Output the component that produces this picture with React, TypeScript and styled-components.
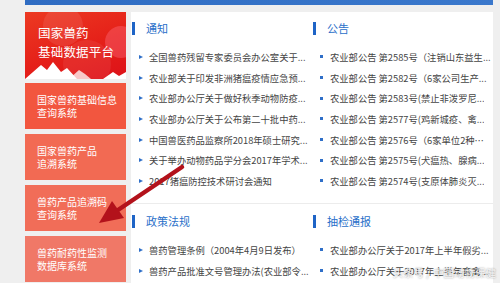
import React from 'react';
import styled, { createGlobalStyle } from 'styled-components';

const GlobalStyle = createGlobalStyle`
  html, body {
    margin: 0;
    padding: 0;
    background: #efefef;
    font-family: "Noto Sans CJK SC", "Noto Sans", sans-serif;
    overflow: hidden;
  }
`;

const sideMenu = [
  { label: '国家兽药基础信息\n查询系统', color: '#f2563f' },
  { label: '国家兽药产品\n追溯系统', color: '#f26a53' },
  { label: '兽药产品追溯码\n查询系统', color: '#f16d58' },
  { label: '兽药耐药性监测\n数据库系统', color: '#f07867' },
];

const blocks = [
  {
    title: '通知',
    bullet: 'arrow',
    items: [
      '全国兽药残留专家委员会办公室关于...',
      '农业部关于印发非洲猪瘟疫情应急预...',
      '农业部办公厅关于做好秋季动物防疫...',
      '农业部办公厅关于公布第二十批中药...',
      '中国兽医药品监察所2018年硕士研究...',
      '关于举办动物药品学分会2017年学术...',
      '2017猪瘟防控技术研讨会通知',
    ],
  },
  {
    title: '公告',
    bullet: 'square',
    items: [
      '农业部公告 第2585号（注销山东益生...',
      '农业部公告 第2582号（6家公司生产...',
      '农业部公告 第2583号(禁止非泼罗尼...',
      '农业部公告 第2577号(鸡新城疫、禽...',
      '农业部公告 第2576号（6家单位2种兽...',
      '农业部公告 第2575号(犬瘟热、腺病...',
      '农业部公告 第2574号(支原体肺炎灭...',
    ],
  },
  {
    title: '政策法规',
    bullet: 'arrow',
    items: ['兽药管理条例（2004年4月9日发布）', '兽药产品批准文号管理办法(农业部令...'],
  },
  {
    title: '抽检通报',
    bullet: 'square',
    items: ['农业部办公厅关于2017年上半年假劣...', '农业部办公厅关于2017年上半年畜禽...'],
  },
];

export default function App() {
  return (
    <>
      <GlobalStyle />
      <Page>
        <TopBar />
        <Main>
          <Side>
            <Banner>
              <BannerArt viewBox="0 0 101 67" preserveAspectRatio="none">
                <circle cx="38" cy="14" r="20" fill="rgba(255,255,255,0.09)" />
                <circle cx="96" cy="30" r="16" fill="rgba(255,120,140,0.35)" />
                <circle cx="62" cy="52" r="24" fill="rgba(255,255,255,0.07)" />
                <polygon points="0,67 8,60 16,53 22,58 28,50 36,60 42,56 52,67" fill="#fff" />
                <polygon points="44,67 54,58 60,62 66,67" fill="rgba(255,255,255,0.75)" />
                <polygon points="78,67 88,60 94,64 101,60 101,67" fill="#fff" />
              </BannerArt>
              <BannerTitle>
                国家兽药
                <br />
                基础数据平台
              </BannerTitle>
            </Banner>
            {sideMenu.map((m) => (
              <MenuCard key={m.label} $color={m.color}>
                {m.label.split('\n').map((l) => (
                  <MenuLine key={l}>{l}</MenuLine>
                ))}
              </MenuCard>
            ))}
          </Side>
          <Panel>
            {blocks.map((b, i) => (
              <Block key={b.title} $top={i < 2}>
                <Heading>
                  <HeadBar />
                  <HeadTitle>{b.title}</HeadTitle>
                </Heading>
                <List>
                  {b.items.map((t) => (
                    <Item key={t}>
                      {b.bullet === 'arrow' ? <ArrowBullet /> : <SquareBullet />}
                      <ItemText>{t}</ItemText>
                    </Item>
                  ))}
                </List>
              </Block>
            ))}
          </Panel>
        </Main>
        <Pointer viewBox="0 0 500 283">
          <line x1="182" y1="167" x2="112" y2="214" stroke="#b3121b" strokeWidth="4.5" strokeLinecap="round" />
          <polygon points="99,223 112,201 124,218" fill="#b3121b" />
        </Pointer>
        <Watermark>头条号 / 中国动物保健</Watermark>
      </Page>
    </>
  );
}

const Page = styled.div`
  position: relative;
  width: 500px;
  height: 283px;
  padding-left: 25px;
  box-sizing: border-box;
  overflow: hidden;
`;
const TopBar = styled.div`
  width: 468px;
  height: 5px;
  background: linear-gradient(90deg, #2f6cc2, #3a78cc);
`;
const Main = styled.div`
  display: flex;
  gap: 5px;
  margin-top: 7px;
  width: 468px;
`;
const Side = styled.div`
  width: 101px;
  flex-shrink: 0;
  display: flex;
  flex-direction: column;
  gap: 5px;
`;
const Banner = styled.div`
  position: relative;
  height: 67px;
  margin-bottom: -1px;
  background: linear-gradient(160deg, #ec3a22 0%, #e52019 55%, #dd1119 100%);
  overflow: hidden;
`;
const BannerArt = styled.svg`
  position: absolute;
  inset: 0;
  width: 100%;
  height: 100%;
`;
const BannerTitle = styled.div`
  position: relative;
  padding: 11px 0 0 13px;
  color: #fff;
  font-size: 12.5px;
  line-height: 19px;
  letter-spacing: 0.2px;
`;
const MenuCard = styled.div<{ $color: string }>`
  height: 46px;
  background: ${(p) => p.$color};
  color: #fff;
  padding-left: 12px;
  display: flex;
  flex-direction: column;
  justify-content: center;
`;
const MenuLine = styled.div`
  font-size: 10px;
  line-height: 13.5px;
  white-space: nowrap;
`;
const Panel = styled.div`
  flex: 1;
  height: 290px;
  background: #fff;
  display: grid;
  grid-template-columns: 181px 181px;
  grid-template-rows: 192px auto;
`;
const Block = styled.div<{ $top: boolean }>`
  padding: ${(p) => (p.$top ? '10px' : '11px')} 0 0 1px;
  border-bottom: ${(p) => (p.$top ? '1px solid #ececec' : 'none')};
  min-width: 0;
`;
const Heading = styled.div`
  display: flex;
  align-items: center;
  height: 13px;
`;
const HeadBar = styled.div`
  width: 3px;
  height: 13px;
  background: #1e64c6;
`;
const HeadTitle = styled.div`
  margin-left: 11px;
  font-size: 11px;
  color: #2a6fc9;
  line-height: 13px;
`;
const List = styled.div`
  margin-top: 11.5px;
`;
const Item = styled.div`
  display: flex;
  align-items: center;
  height: 20.7px;
  padding-left: 7px;
  padding-right: 2px;
`;
const ArrowBullet = styled.span`
  width: 0;
  height: 0;
  border-top: 2.5px solid transparent;
  border-bottom: 2.5px solid transparent;
  border-left: 4px solid #2f6fc8;
  margin-right: 6px;
  flex-shrink: 0;
`;
const SquareBullet = styled.span`
  width: 3px;
  height: 3px;
  background: #2f6fc8;
  margin-right: 7px;
  flex-shrink: 0;
`;
const ItemText = styled.span`
  font-size: 9.3px;
  line-height: 12px;
  color: #444;
  white-space: nowrap;
  overflow: hidden;
  text-overflow: ellipsis;
`;
const Pointer = styled.svg`
  position: absolute;
  left: 0;
  top: 0;
  width: 500px;
  height: 283px;
  pointer-events: none;
`;
const Watermark = styled.div`
  position: absolute;
  right: 4px;
  bottom: 4px;
  font-size: 10.5px;
  line-height: 13px;
  color: rgba(255, 255, 255, 0.85);
  text-shadow: 0 0 2px rgba(0, 0, 0, 0.45);
  white-space: nowrap;
`;
